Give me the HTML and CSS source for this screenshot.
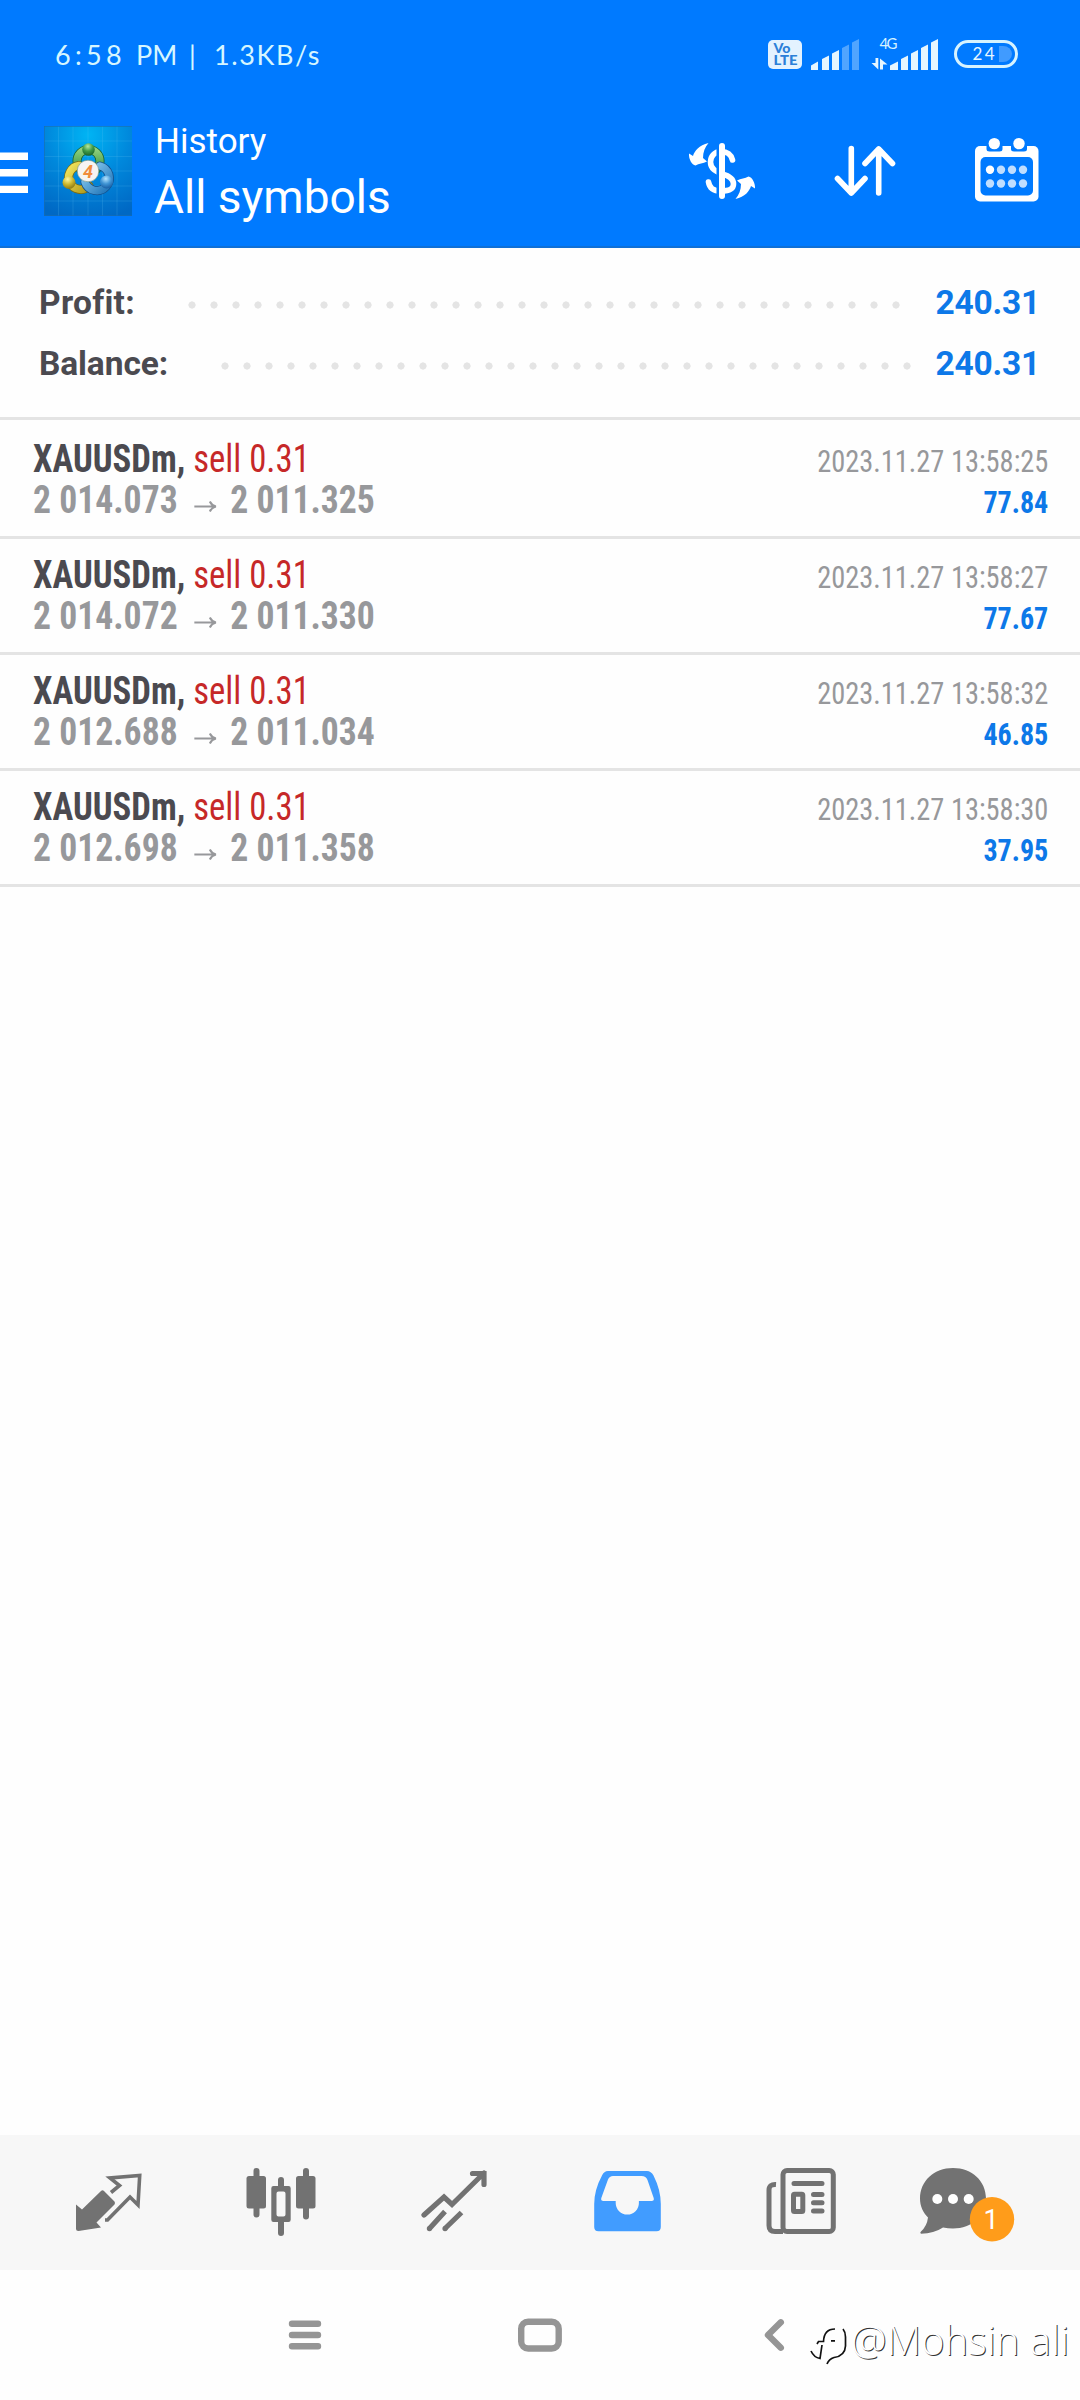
FILE: index.html
```html
<!DOCTYPE html>
<html lang="en">
<head>
<meta charset="utf-8">
<title>History</title>
<link rel="stylesheet" href="styles.css">
</head>
<body>
<header class="header">
  <div class="status">
    <div class="status-left"><span class="time">6:58</span><span class="pm">PM</span><span class="bar">|</span><span class="rate">1.3KB/s</span></div>
    <svg class="status-icons" viewBox="760 28 270 54" width="270" height="54">
      <rect x="768" y="40" width="34" height="29" rx="5" fill="#e3f2ff"/>
      <text x="773.5" y="53" class="volte" textLength="17" lengthAdjust="spacingAndGlyphs">Vo</text>
      <text x="773.5" y="65" class="volte" textLength="24" lengthAdjust="spacingAndGlyphs">LTE</text>
      <g fill="#e6f6ff">
        <path d="M811 70V65.500L818 61.500V70ZM822 70V59L829 55.500V70ZM832 70V53.500L839 50V70Z"/>
        <path d="M842 70V48L849 44.500V70ZM852 70V42.500L859 39V70Z" opacity=".35"/>
        <path d="M890 70V65.500L898 61.500V70ZM901 70V59L908 55.500V70ZM911 70V53.500L918 50V70ZM921 70V48L928 44.500V70ZM931 70V42.500L938 39V70Z"/>
        <path d="M875.500 58h2.800v11.500L871.500 63h4ZM880 69.500V58.500L887.500 64.500H883v5Z"/>
      </g>
      <text x="879.500" y="49" class="net" textLength="18">4G</text>
      <rect x="955.500" y="41.500" width="61" height="25" rx="12.500" fill="none" stroke="#d6f3ff" stroke-width="3"/>
      <path d="M999 46h4a9 8 0 0 1 0 16h-4Z" fill="#409bff"/>
      <text x="972.500" y="60" class="batt" textLength="22">24</text>
    </svg>
  </div>
  <div class="toolbar">
    <svg viewBox="0 132 30 90" width="30" height="90" fill="#fff"><path d="M0 152.500h28v7.500H0ZM0 169h28v7.500H0ZM0 185.700h28v7.300H0Z"/></svg>
    <svg class="logo" viewBox="44 126 88 90" width="88" height="90">
      <defs>
        <radialGradient id="bg" cx=".5" cy=".1" r=".95"><stop offset="0" stop-color="#00b4f4"/><stop offset=".5" stop-color="#0088dc"/><stop offset="1" stop-color="#0068c4"/></radialGradient>
        <linearGradient id="gr" x1="0" y1="0" x2="0" y2="1"><stop offset="0" stop-color="#8fd07c"/><stop offset="1" stop-color="#2c8a3c"/></linearGradient>
        <linearGradient id="ye" x1="0" y1="0" x2="1" y2="1"><stop offset="0" stop-color="#f2e45c"/><stop offset="1" stop-color="#b09a1c"/></linearGradient>
        <linearGradient id="bl" x1="0" y1="0" x2="1" y2="1"><stop offset="0" stop-color="#8fd0f4"/><stop offset="1" stop-color="#1f74b8"/></linearGradient>
        <radialGradient id="gb" cx=".45" cy=".25" r=".8"><stop offset="0" stop-color="#b4e8a0"/><stop offset=".5" stop-color="#3f9a48"/><stop offset="1" stop-color="#145c28"/></radialGradient>
        <radialGradient id="yb" cx=".4" cy=".25" r=".8"><stop offset="0" stop-color="#fff7a0"/><stop offset=".5" stop-color="#cdb82e"/><stop offset="1" stop-color="#857010"/></radialGradient>
        <radialGradient id="bb" cx=".45" cy=".25" r=".8"><stop offset="0" stop-color="#b4e4ff"/><stop offset=".5" stop-color="#3f94d4"/><stop offset="1" stop-color="#14569c"/></radialGradient>
      </defs>
      <rect x="44" y="126" width="88" height="90" fill="url(#bg)"/>
      <path d="M58.500 126v90M73 126v90M88 126v90M102.500 126v90M117 126v90M44 141h88M44 156.500h88M44 171h88M44 186h88M44 201h88" stroke="#6cc8f4" stroke-opacity=".18" fill="none"/>
      <path d="M44 126.500h88M44 215.500h88M44.500 126v90" stroke="#1c6cae" stroke-opacity=".6"/>
      <g fill="none" stroke-linecap="round">
        <circle cx="88.500" cy="161" r="11.500" stroke="#17602c" stroke-width="9"/>
        <circle cx="88.500" cy="161" r="11.500" stroke="url(#gr)" stroke-width="7.400"/>
        <path d="M79 165.500A12 12 0 1 0 89 186" stroke="#7a6c14" stroke-width="9"/>
        <path d="M79 165.500A12 12 0 1 0 89 186" stroke="url(#ye)" stroke-width="7.400"/>
        <path d="M100 166A12.500 12.500 0 1 1 85 182" stroke="#14508c" stroke-width="9"/>
        <path d="M100 166A12.500 12.500 0 1 1 85 182" stroke="url(#bl)" stroke-width="7.400"/>
      </g>
      <circle cx="88.500" cy="149.500" r="6.300" fill="url(#gb)"/>
      <circle cx="69" cy="182.500" r="6.500" fill="url(#yb)"/>
      <circle cx="106.500" cy="182" r="6.500" fill="url(#bb)"/>
      <circle cx="88" cy="171" r="10.800" fill="#f6f4f2" stroke="#6c8c7c" stroke-width=".6"/>
      <text x="88" y="177.500" class="four">4</text>
    </svg>
    <div class="titles"><div class="subtitle">History</div><div class="title">All symbols</div></div>
    <svg class="act-money" viewBox="682 132 80 90" width="80" height="90">
      <path d="M732.500 160C731 154 727 151.500 721 151.500C714 151.500 710.500 157 710.500 162C710.500 169 716 171.500 722 174C730 176 733.500 179 733.500 184C733.500 189.500 729 191 721 191C713 191 709.500 188 708.500 182" fill="none" stroke="#fff" stroke-width="5.600" stroke-linecap="round"/>
      <path d="M718 145v52" stroke="#007aff" stroke-width="3"/><path d="M722 146v50" stroke="#fff" stroke-width="6" stroke-linecap="round"/>
      <path id="arw" d="M708.500 143C699 145 694.500 151 693 156L689 153.500C688.500 159 692 165 695.500 165.500C699 163.500 703 163.500 707 161.500L703 158C703 152 705 147 708.500 143Z" fill="#fff"/>
      <use href="#arw" transform="rotate(180 722 171)"/>
    </svg>
    <svg class="act-sort" viewBox="827 132 76 90" width="76" height="90" fill="none" stroke="#fff" stroke-width="5.600" stroke-linecap="round" stroke-linejoin="round">
      <path d="M851.300 148.500V193M837.500 178.500L851.300 193L865 178.500M878.700 193V149M865 163.500L878.700 149L892.500 163.500"/>
    </svg>
    <svg class="act-cal" viewBox="967 132 80 90" width="80" height="90">
      <rect x="975" y="146" width="63.500" height="55.500" rx="5" fill="#fff"/>
      <path d="M986.500 143h16v6q0 2.500-3 2.500h-10q-3 0-3-2.500ZM1011 143h16v6q0 2.500-3 2.500h-10q-3 0-3-2.500Z" fill="#007aff"/>
      <circle cx="994.300" cy="143.600" r="5.700" fill="#fff"/><circle cx="1019" cy="143.600" r="5.700" fill="#fff"/>
      <rect x="980.500" y="157" width="52.500" height="38.500" rx="5" fill="#007aff"/>
      <circle cx="990" cy="169.700" r="4.200" fill="#fff"/>
      <g fill="#c0deff"><circle cx="1001" cy="169.700" r="4.200"/><circle cx="1012" cy="169.700" r="4.200"/><circle cx="1023" cy="169.700" r="4.200"/><circle cx="990" cy="183.500" r="4.200"/><circle cx="1001" cy="183.500" r="4.200"/><circle cx="1012" cy="183.500" r="4.200"/><circle cx="1023" cy="183.500" r="4.200"/></g>
    </svg>
  </div>
</header>
<main class="main">
  <section class="summary">
    <div class="total"><span class="total-label">Profit:</span><i class="dots"></i><b class="amount">240.31</b></div>
    <div class="total wide"><span class="total-label">Balance:</span><i class="dots"></i><b class="amount">240.31</b></div>
  </section>
  <section class="deals">
    <article class="deal"><div><div class="line"><b>XAUUSDm,</b> <span class="sell">sell 0.31</span></div><div class="prices"><span>2 014.073</span><svg class="arrow" viewBox="0 0 24 16"><path d="M0 8.500h22M16.500 3.500q2 4 6.500 5q-4.500 1-6.500 5"/></svg><span>2 011.325</span></div></div><div class="right"><div class="date">2023.11.27 13:58:25</div><div class="gain">77.84</div></div></article>
    <article class="deal"><div><div class="line"><b>XAUUSDm,</b> <span class="sell">sell 0.31</span></div><div class="prices"><span>2 014.072</span><svg class="arrow" viewBox="0 0 24 16"><path d="M0 8.500h22M16.500 3.500q2 4 6.500 5q-4.500 1-6.500 5"/></svg><span>2 011.330</span></div></div><div class="right"><div class="date">2023.11.27 13:58:27</div><div class="gain">77.67</div></div></article>
    <article class="deal"><div><div class="line"><b>XAUUSDm,</b> <span class="sell">sell 0.31</span></div><div class="prices"><span>2 012.688</span><svg class="arrow" viewBox="0 0 24 16"><path d="M0 8.500h22M16.500 3.500q2 4 6.500 5q-4.500 1-6.500 5"/></svg><span>2 011.034</span></div></div><div class="right"><div class="date">2023.11.27 13:58:32</div><div class="gain">46.85</div></div></article>
    <article class="deal"><div><div class="line"><b>XAUUSDm,</b> <span class="sell">sell 0.31</span></div><div class="prices"><span>2 012.698</span><svg class="arrow" viewBox="0 0 24 16"><path d="M0 8.500h22M16.500 3.500q2 4 6.500 5q-4.500 1-6.500 5"/></svg><span>2 011.358</span></div></div><div class="right"><div class="date">2023.11.27 13:58:30</div><div class="gain">37.95</div></div></article>
  </section>
</main>
<nav class="tabs">
  <svg viewBox="22 2135 173 135"><path d="M76 2204.500L82 2209.500L101 2191Q102.500 2189.500 104 2191L114.500 2201.500Q115.500 2203 114.500 2204.500L96.500 2222.500L101 2227.500L78.500 2231Q76 2231 76 2228.500Z" fill="#727272"/><path d="M111 2192.500L119.500 2185.500L110 2178L139.700 2175.500L138 2205L130 2197L107.500 2220H105" fill="none" stroke="#727272" stroke-width="3.600"/></svg>
  <svg viewBox="195 2135 173 135" fill="#727272"><rect x="246.500" y="2176" width="19.500" height="32.500" rx="2.500"/><rect x="296" y="2176" width="19.500" height="32.500" rx="2.500"/><path d="M256.500 2171v43.500M281 2180v8M281 2221v12M306 2171v45.500" stroke="#727272" stroke-width="6" stroke-linecap="round"/><path fill-rule="evenodd" d="M273.500 2186h15q2.200 0 2.200 2.200v31.600q0 2.200-2.200 2.200h-15q-2.200 0-2.200-2.200v-31.600q0-2.200 2.200-2.200ZM278.500 2191.500q-2 0-2 2v21q0 2 2 2h5q2 0 2-2v-21q0-2-2-2Z"/></svg>
  <svg viewBox="368 2135 173 135" fill="none" stroke="#727272" stroke-width="5.200"><path d="M424 2215L444 2197L452 2204.500L484 2173M472.500 2173.500H484V2184.500" stroke-linecap="round"/><path d="M429.500 2228.500L445 2211.500M445 2228.500L461.500 2212.500"/><path d="M429.400 2228.600h.1M445 2228.600h.1" stroke-linecap="round"/></svg>
  <svg viewBox="541 2135 173 135"><path fill="#419cff" fill-rule="evenodd" d="M608 2171H647Q651 2171 653.500 2175.500Q660.800 2190 660.800 2204V2227Q660.800 2231.200 656.500 2231.200H598.500Q594.200 2231.200 594.200 2227V2204Q594.200 2190 602 2175.500Q604 2171 608 2171ZM613 2176Q609.500 2176 608 2179.500L601.300 2198Q600.500 2201 603.500 2201H615.700V2203A11.600 11.600 0 0 0 638.900 2203V2201H651.500Q654.500 2201 653.700 2198L647.500 2180Q646 2176 641.500 2176Z"/></svg>
  <svg viewBox="714 2135 173 135" fill="none" stroke="#727272" stroke-width="5"><rect x="783" y="2170.500" width="50.300" height="61" rx="4"/><path d="M776 2184.500Q769 2184 769 2190V2225.500Q769 2231.500 775 2231.500H783"/><path d="M794 2183.500h28M813.500 2194.500h8.500M813.500 2202.700h8.500M813.500 2211h8.500" stroke-linecap="round"/><rect x="793.500" y="2194.300" width="9.300" height="17.200" rx="1"/></svg>
  <svg viewBox="887 2135 173 135"><path fill="#727272" d="M953 2168C972 2168 986 2181 986 2198.500C986 2216 972 2228.500 953 2228.500Q948 2228.500 943 2227.500Q934 2233.500 921 2233.700Q919.500 2233 921 2231.500Q927 2226 928 2217.500C923 2212.500 920 2206 920 2198.500C920 2181 934 2168 953 2168Z"/><g fill="#fff"><circle cx="937.300" cy="2199" r="5"/><circle cx="953" cy="2199" r="5"/><circle cx="968.700" cy="2199" r="5"/></g><circle cx="992" cy="2219.300" r="22.200" fill="#ff9c1a"/><text x="991" y="2229" class="badge">1</text></svg>
</nav>
<footer class="nav">
  <svg viewBox="180 2277 720 130" width="720" height="130" fill="none" stroke="#959595" stroke-width="6.400" stroke-linecap="round" stroke-linejoin="round"><path d="M292 2330.700h26M292 2342h26M292 2353.300h26M780.800 2329.300L768 2342L780.800 2354.700"/><rect x="521.200" y="2328.700" width="37.500" height="26.800" rx="7"/></svg>
  <div class="mark">
    <svg viewBox="808 2321 43 50" width="43" height="50" fill="none" stroke="#111" stroke-width="1.700"><path d="M835 2329Q824 2329 823.500 2341.500H818.500L817 2344M822 2345L820 2358.500Q814 2357.500 811 2351M831 2340.800h4"/><path d="M843 2329Q845.500 2332 845.500 2337V2346Q845 2356 834 2357.500Q829 2359 827 2364"/></svg>
    <span>@Mohsin ali</span>
  </div>
</footer>
</body>
</html>
```
FILE: styles.css
```css
* { box-sizing: border-box; }
body { margin: 0; width: 1080px; height: 2400px; display: flex; flex-direction: column; background: #fefefe; font-family: Roboto, sans-serif; overflow: hidden; }
svg { display: block; flex: none; }
.header { height: 248px; background: #007aff; border-bottom: 2px solid #1070d6; color: #fff; }
.status { height: 108px; padding: 28px 50px 0 55px; display: flex; justify-content: space-between; }
.status-left { display: flex; font: 400 27px/53px Lato, sans-serif; color: #d6f6ff; letter-spacing: 4.3px; white-space: pre; }
.time { width: 81px; }
.pm { width: 53px; letter-spacing: 0; }
.bar { width: 25px; }
.rate { letter-spacing: 1.6px; }
.volte { font: 900 12.5px Lato, sans-serif; fill: #2b7fd8; }
.net { font: 400 15px Lato, sans-serif; fill: #d6f3ff; }
.batt { font: 400 17px Lato, sans-serif; fill: #e6f6ff; }
.toolbar { height: 138px; display: flex; align-items: center; }
.logo { margin: -12px 0 0 14px; }
.titles { width: 548px; padding-left: 22px; margin-top: -8px; }
.four { font: italic 700 18px Roboto, sans-serif; fill: #f08c3c; text-anchor: middle; }
.subtitle { font-size: 35px; line-height: 48px; padding: 1px 0 0 1px; }
.title { font-size: 46px; line-height: 63px; }
.act-money { margin-left: 2px; }
.act-sort { margin-left: 65px; }
.act-cal { margin-left: 64px; }
.main { flex: 1; }
.summary { height: 172px; padding: 24px 40px 0 39px; border-bottom: 3px solid #e4e4e4; }
.total { height: 61px; display: flex; align-items: center; font: 700 33.5px/61px Roboto, sans-serif; color: #4b4a50; }
.total-label { width: 141.5px; letter-spacing: 0.3px; }
.wide .total-label { width: 174.5px; letter-spacing: -0.1px; }
.dots { width: 726px; height: 8px; margin-top: 5px; background: radial-gradient(circle at 11px 4px, #e4e4e4 3.3px, transparent 3.9px) 0 0 / 22px 8px repeat-x; }
.wide .dots { width: 704px; }
.amount { margin-left: auto; font-weight: 700; color: #0d78e8; letter-spacing: -0.2px; }
.deal { height: 116px; padding: 16px 32px 0 33px; display: flex; justify-content: space-between; border-bottom: 3px solid #e4e4e4; font-family: "Roboto Condensed", Roboto, sans-serif; white-space: nowrap; }
.deal:first-child { height: 119px; padding-top: 19px; }
.line, .prices { font-size: 38px; line-height: 41px; height: 41px; transform-origin: left; }
.line { color: #4b4a50; transform: scaleX(0.914); }
.sell { color: #c62828; }
.prices { display: flex; align-items: center; font-weight: 700; color: #97989b; transform: scaleX(0.938); }
.arrow { width: 26px; height: 16px; margin: 11px 13px 0 17px; fill: none; stroke: #97989b; stroke-width: 2.2; }
.right { text-align: right; }
.date, .gain { line-height: 41px; padding-top: 2px; height: 41px; transform-origin: right; }
.date { font-size: 32px; color: #97989b; transform: scaleX(0.888); }
.gain { font-size: 31px; font-weight: 700; color: #0d78e8; transform: scaleX(0.905); }
.tabs { height: 135px; padding-left: 22px; display: flex; background: #f7f7f7; }
.tabs svg { width: 173px; height: 135px; }
.badge { font: 400 27px Roboto, sans-serif; fill: #fff; text-anchor: middle; }
.nav { height: 130px; padding-left: 180px; position: relative; }
.mark { position: absolute; left: 808px; top: 51px; display: flex; align-items: center; font: 300 40px/50px "Open Sans", sans-serif; color: #fff; text-shadow: 1px 1px 0 #333; white-space: nowrap; }
.mark span { margin-top: -12px; }
```
